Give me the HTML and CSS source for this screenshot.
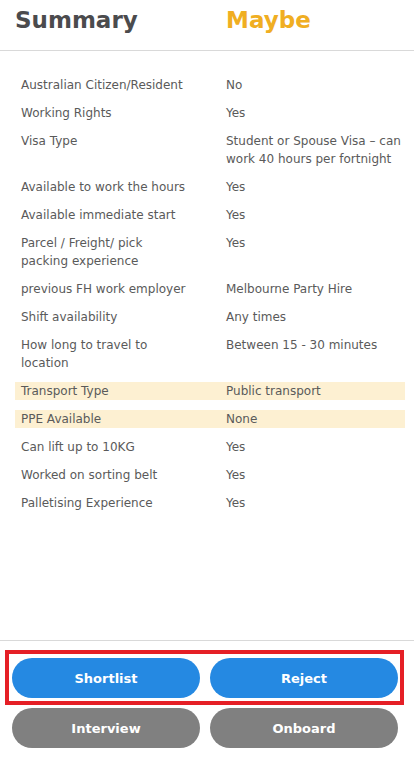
FILE: index.html
```html
<!DOCTYPE html>
<html>
<head>
<meta charset="utf-8">
<link rel="stylesheet" href="styles.css">
</head>
<body>
<div class="page">
  <header class="head">
    <div class="head-title">Summary</div>
    <div class="head-status">Maybe</div>
  </header>
  <main class="details">
    <div class="row"><div class="label">Australian Citizen/Resident</div><div class="value">No</div></div>
    <div class="row"><div class="label">Working Rights</div><div class="value">Yes</div></div>
    <div class="row"><div class="label">Visa Type</div><div class="value">Student or Spouse Visa – can work 40 hours per fortnight</div></div>
    <div class="row"><div class="label">Available to work the hours</div><div class="value">Yes</div></div>
    <div class="row"><div class="label">Available immediate start</div><div class="value">Yes</div></div>
    <div class="row"><div class="label">Parcel / Freight/ pick packing experience</div><div class="value">Yes</div></div>
    <div class="row"><div class="label">previous FH work employer</div><div class="value">Melbourne Party Hire</div></div>
    <div class="row"><div class="label">Shift availability</div><div class="value">Any times</div></div>
    <div class="row"><div class="label">How long to travel to location</div><div class="value">Between 15 - 30 minutes</div></div>
    <div class="row hl"><div class="label">Transport Type</div><div class="value">Public transport</div></div>
    <div class="row hl"><div class="label">PPE Available</div><div class="value">None</div></div>
    <div class="row"><div class="label">Can lift up to 10KG</div><div class="value">Yes</div></div>
    <div class="row"><div class="label">Worked on sorting belt</div><div class="value">Yes</div></div>
    <div class="row"><div class="label">Palletising Experience</div><div class="value">Yes</div></div>
  </main>
  <footer class="actions">
    <div class="btn-row boxed">
      <button class="btn blue">Shortlist</button>
      <button class="btn blue">Reject</button>
    </div>
    <div class="btn-row">
      <button class="btn gray">Interview</button>
      <button class="btn gray">Onboard</button>
    </div>
  </footer>
</div>
</body>
</html>
```
FILE: styles.css
```css
* { box-sizing: border-box; }
html, body { margin: 0; padding: 0; background: #fff; }
body { font-family: "DejaVu Sans", "Noto Sans", sans-serif; color: #555; }
.page { width: 414px; height: 763px; display: flex; flex-direction: column; }
.head {
  height: 51px;
  border-bottom: 1px solid #d9d9d9;
  display: flex;
  align-items: flex-start;
  padding: 4px 0 0 15px;
}
.head-title { width: 211px; font-size: 23px; font-weight: 700; color: #4b4b4d; line-height: 32px; }
.head-status { font-size: 23px; font-weight: 700; color: #f0ae22; line-height: 32px; }
.details { flex: 1; padding: 25px 9px 0 15px; }
.row { display: flex; margin-bottom: 10px; font-size: 12px; line-height: 18px; color: #5a5a5a; }
.row.hl { background: #fdf0d2; }
.label { width: 211px; padding-left: 6px; padding-right: 39px; }
.value { flex: 1; padding-right: 4px; }
.actions { border-top: 1px solid #d9d9d9; padding: 9px 10px 15px 5px; display: flex; flex-direction: column; gap: 3px; }
.btn-row { display: flex; gap: 10px; padding: 0 6px 0 7px; }
.btn-row.boxed { border: 4px solid #e51f26; padding: 4px 2px 3px 3px; }
.btn {
  flex: 1; height: 40px; border: none; border-radius: 20px;
  color: #fff; font-family: "DejaVu Sans", sans-serif; font-weight: 700; font-size: 13px;
}
.btn.blue { background: #2589e2; }
.btn.gray { background: #808080; }
```
